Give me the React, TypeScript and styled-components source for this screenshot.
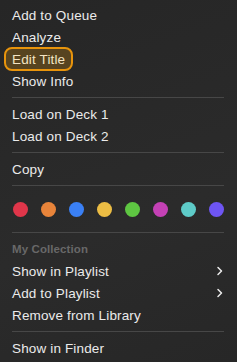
import React from "react";
import styled, { createGlobalStyle } from "styled-components";

const Global = createGlobalStyle`
  html, body { margin: 0; padding: 0; background: #272727; }
  body { font-family: "Liberation Sans", Arial, sans-serif; -webkit-font-smoothing: antialiased; }
`;

const Menu = styled.div`
  width: 237px;
  height: 362px;
  box-sizing: border-box;
  padding-top: 4px;
  background: linear-gradient(160deg, #262626 0%, #2b2b2b 60%, #272727 100%);
  display: flex;
  flex-direction: column;
  overflow: hidden;
`;

const Row = styled.div`
  height: 22px;
  padding: 0 12px;
  display: flex;
  align-items: center;
  justify-content: space-between;
  color: #ebebeb;
  font-size: 13.5px;
  letter-spacing: 0.15px;
`;

const Header = styled(Row)`
  color: #686868;
  font-weight: 700;
  font-size: 11.5px;
  letter-spacing: 0.1px;
`;

const Highlight = styled.span`
  display: inline-flex;
  align-items: center;
  height: 24px;
  box-sizing: border-box;
  margin-left: -8px;
  padding: 0 6px;
  border: 2px solid #e8940c;
  border-radius: 8px;
  background: #574420;
  color: #f3e4c4;
`;

const Separator = styled.div`
  height: 1px;
  margin: 5px 13px 5px 12px;
  background: #474747;
`;

const Dots = styled.div`
  height: 36px;
  padding: 0 13px;
  display: flex;
  align-items: center;
  justify-content: space-between;
`;

const Dot = styled.span<{ $c: string }>`
  width: 15px;
  height: 15px;
  border-radius: 50%;
  background: ${(p) => p.$c};
`;

const ChevronIcon = styled.svg`
  margin-right: 1px;
`;

const Chevron = () => (
  <ChevronIcon width="8" height="10" viewBox="0 0 8 10">
    <path d="M2 1.5 L5.5 5 L2 8.5" fill="none" stroke="#ebebeb" strokeWidth="1.5" strokeLinecap="round" strokeLinejoin="round" />
  </ChevronIcon>
);

const colors = ["#e0364a", "#e8843a", "#3a80f5", "#ecbd44", "#5ec642", "#c441b5", "#5ecbc8", "#6e55f3"];

export default function App() {
  return (
    <>
      <Global />
      <Menu>
        <Row>Add to Queue</Row>
        <Row>Analyze</Row>
        <Row><Highlight>Edit Title</Highlight></Row>
        <Row>Show Info</Row>
        <Separator />
        <Row>Load on Deck 1</Row>
        <Row>Load on Deck 2</Row>
        <Separator />
        <Row>Copy</Row>
        <Separator />
        <Dots>
          {colors.map((c) => <Dot key={c} $c={c} />)}
        </Dots>
        <Separator />
        <Header>My Collection</Header>
        <Row>Show in Playlist<Chevron /></Row>
        <Row>Add to Playlist<Chevron /></Row>
        <Row>Remove from Library</Row>
        <Separator />
        <Row>Show in Finder</Row>
      </Menu>
    </>
  );
}
